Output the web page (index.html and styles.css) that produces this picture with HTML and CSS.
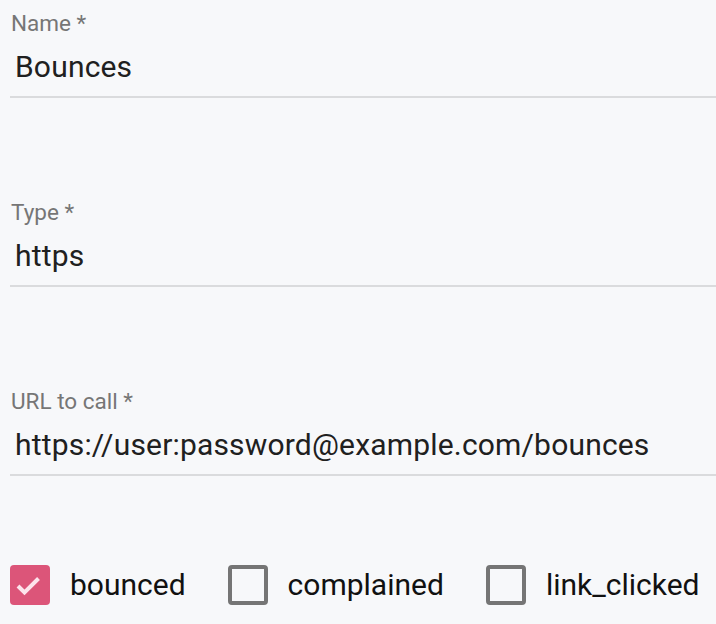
FILE: index.html
```html
<!DOCTYPE html>
<html>
<head>
<meta charset="utf-8">
<link rel="stylesheet" href="styles.css">
</head>
<body>
<form class="form">
  <div class="field">
    <div class="label">Name *</div>
    <div class="value">Bounces</div>
  </div>
  <div class="field">
    <div class="label">Type *</div>
    <div class="value">https</div>
  </div>
  <div class="field">
    <div class="label">URL to call *</div>
    <div class="value">https://user:password@example.com/bounces</div>
  </div>
  <div class="checks">
    <label class="check">
      <span class="box checked">
        <svg viewBox="0 0 40 40" width="40" height="40"><path d="M8 21 L14.5 27.5 L28.5 13.5" fill="none" stroke="#fde4ec" stroke-width="4"/></svg>
      </span>
      <span class="text">bounced</span>
    </label>
    <label class="check">
      <span class="box"></span>
      <span class="text">complained</span>
    </label>
    <label class="check">
      <span class="box"></span>
      <span class="text">link_clicked</span>
    </label>
  </div>
</form>
</body>
</html>
```
FILE: styles.css
```css
html, body {
  margin: 0;
  padding: 0;
  background: #f7f8fa;
}
body {
  font-family: Roboto, "Liberation Sans", sans-serif;
  width: 716px;
  height: 624px;
  overflow: hidden;
}
.form {
  display: flex;
  flex-direction: column;
  gap: 101px;
  padding: 10px 0 0 10px;
}
.field {
  display: flex;
  flex-direction: column;
  border-bottom: 2px solid #dadbdd;
}
.label {
  font-size: 22.5px;
  line-height: 26px;
  color: #767676;
  padding-left: 1px;
}
.value {
  font-size: 30px;
  line-height: 34px;
  letter-spacing: 0.18px;
  color: #202020;
  margin-top: 14px;
  padding: 0 0 12px 5px;
}
.checks {
  display: flex;
  align-items: center;
  gap: 42px;
  margin-top: -12px;
}
.check {
  display: flex;
  align-items: center;
  gap: 20px;
}
.box {
  width: 40px;
  height: 40px;
  box-sizing: border-box;
  border: 4px solid #757575;
  border-radius: 4px;
  display: block;
}
.box.checked {
  border: none;
  background: #dc5579;
}
.box svg {
  display: block;
}
.text {
  font-size: 30px;
  line-height: 34px;
  color: #111111;
}
```
